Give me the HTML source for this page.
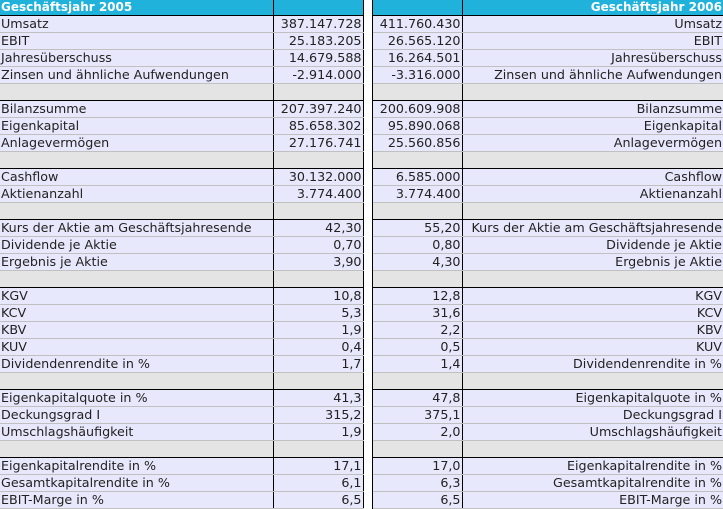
<!DOCTYPE html>
<html><head><meta charset="utf-8"><style>
body{margin:0;width:723px;height:508px;overflow:hidden;background:#fff;font-family:"DejaVu Sans","Liberation Sans",sans-serif;font-size:12.7px;color:#222}
table{border-collapse:collapse;table-layout:fixed;width:723px}
td{padding:0 1px;height:16px;line-height:16px;border-bottom:1px solid #c0c0c0;background:#e8e8fc;white-space:nowrap;overflow:hidden}
td.r{text-align:right}
td.a{border-right:1px solid #000}
td.g{background:#fff;border-left:1px solid #000;border-right:1px solid #000;border-bottom:none}
tr.h td{background:#21b2dc;color:#fff;font-weight:bold;font-size:12px;height:15px;line-height:15px;border-bottom:1px solid #000}
tr.h td.g{background:#fff;border-bottom:none}
tr.b td{background:#e4e4e4;border-top:1px solid #000;border-bottom:1px solid #000}
tr.b td.g{background:#fff;border-top:none;border-bottom:none}
</style></head><body>
<table>
<colgroup><col style="width:273px"><col style="width:90px"><col style="width:9px"><col style="width:90px"><col style="width:261px"></colgroup>
<tr class="h"><td class="a">Geschäftsjahr 2005</td><td class="a"></td><td class="g"></td><td class="a"></td><td class="r">Geschäftsjahr 2006</td></tr>
<tr><td class="a">Umsatz</td><td class="a r">387.147.728</td><td class="g"></td><td class="a r">411.760.430</td><td class="r">Umsatz</td></tr>
<tr><td class="a">EBIT</td><td class="a r">25.183.205</td><td class="g"></td><td class="a r">26.565.120</td><td class="r">EBIT</td></tr>
<tr><td class="a">Jahresüberschuss</td><td class="a r">14.679.588</td><td class="g"></td><td class="a r">16.264.501</td><td class="r">Jahresüberschuss</td></tr>
<tr><td class="a">Zinsen und ähnliche Aufwendungen</td><td class="a r">-2.914.000</td><td class="g"></td><td class="a r">-3.316.000</td><td class="r">Zinsen und ähnliche Aufwendungen</td></tr>
<tr class="b"><td class="a"></td><td class="a"></td><td class="g"></td><td class="a"></td><td></td></tr>
<tr><td class="a">Bilanzsumme</td><td class="a r">207.397.240</td><td class="g"></td><td class="a r">200.609.908</td><td class="r">Bilanzsumme</td></tr>
<tr><td class="a">Eigenkapital</td><td class="a r">85.658.302</td><td class="g"></td><td class="a r">95.890.068</td><td class="r">Eigenkapital</td></tr>
<tr><td class="a">Anlagevermögen</td><td class="a r">27.176.741</td><td class="g"></td><td class="a r">25.560.856</td><td class="r">Anlagevermögen</td></tr>
<tr class="b"><td class="a"></td><td class="a"></td><td class="g"></td><td class="a"></td><td></td></tr>
<tr><td class="a">Cashflow</td><td class="a r">30.132.000</td><td class="g"></td><td class="a r">6.585.000</td><td class="r">Cashflow</td></tr>
<tr><td class="a">Aktienanzahl</td><td class="a r">3.774.400</td><td class="g"></td><td class="a r">3.774.400</td><td class="r">Aktienanzahl</td></tr>
<tr class="b"><td class="a"></td><td class="a"></td><td class="g"></td><td class="a"></td><td></td></tr>
<tr><td class="a">Kurs der Aktie am Geschäftsjahresende</td><td class="a r">42,30</td><td class="g"></td><td class="a r">55,20</td><td class="r">Kurs der Aktie am Geschäftsjahresende</td></tr>
<tr><td class="a">Dividende je Aktie</td><td class="a r">0,70</td><td class="g"></td><td class="a r">0,80</td><td class="r">Dividende je Aktie</td></tr>
<tr><td class="a">Ergebnis je Aktie</td><td class="a r">3,90</td><td class="g"></td><td class="a r">4,30</td><td class="r">Ergebnis je Aktie</td></tr>
<tr class="b"><td class="a"></td><td class="a"></td><td class="g"></td><td class="a"></td><td></td></tr>
<tr><td class="a">KGV</td><td class="a r">10,8</td><td class="g"></td><td class="a r">12,8</td><td class="r">KGV</td></tr>
<tr><td class="a">KCV</td><td class="a r">5,3</td><td class="g"></td><td class="a r">31,6</td><td class="r">KCV</td></tr>
<tr><td class="a">KBV</td><td class="a r">1,9</td><td class="g"></td><td class="a r">2,2</td><td class="r">KBV</td></tr>
<tr><td class="a">KUV</td><td class="a r">0,4</td><td class="g"></td><td class="a r">0,5</td><td class="r">KUV</td></tr>
<tr><td class="a">Dividendenrendite in %</td><td class="a r">1,7</td><td class="g"></td><td class="a r">1,4</td><td class="r">Dividendenrendite in %</td></tr>
<tr class="b"><td class="a"></td><td class="a"></td><td class="g"></td><td class="a"></td><td></td></tr>
<tr><td class="a">Eigenkapitalquote in %</td><td class="a r">41,3</td><td class="g"></td><td class="a r">47,8</td><td class="r">Eigenkapitalquote in %</td></tr>
<tr><td class="a">Deckungsgrad I</td><td class="a r">315,2</td><td class="g"></td><td class="a r">375,1</td><td class="r">Deckungsgrad I</td></tr>
<tr><td class="a">Umschlagshäufigkeit</td><td class="a r">1,9</td><td class="g"></td><td class="a r">2,0</td><td class="r">Umschlagshäufigkeit</td></tr>
<tr class="b"><td class="a"></td><td class="a"></td><td class="g"></td><td class="a"></td><td></td></tr>
<tr><td class="a">Eigenkapitalrendite in %</td><td class="a r">17,1</td><td class="g"></td><td class="a r">17,0</td><td class="r">Eigenkapitalrendite in %</td></tr>
<tr><td class="a">Gesamtkapitalrendite in %</td><td class="a r">6,1</td><td class="g"></td><td class="a r">6,3</td><td class="r">Gesamtkapitalrendite in %</td></tr>
<tr><td class="a">EBIT-Marge in %</td><td class="a r">6,5</td><td class="g"></td><td class="a r">6,5</td><td class="r">EBIT-Marge in %</td></tr>
</table>
</body></html>
